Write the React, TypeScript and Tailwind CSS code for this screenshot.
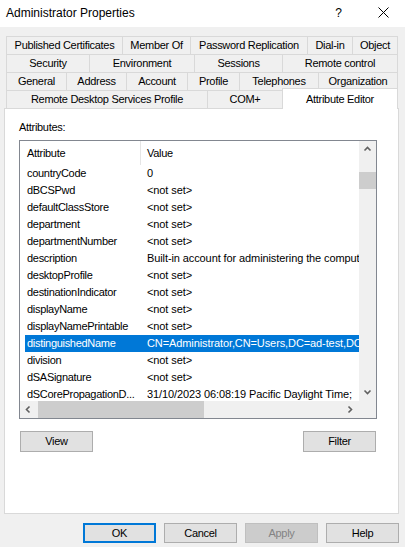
import React from "react";

type Tab = { label: string; w: string; last?: boolean };

const tabRows: Tab[][] = [
  [
    { label: "Published Certificates", w: "w-[116px]" },
    { label: "Member Of", w: "w-[68px]" },
    { label: "Password Replication", w: "w-[117px]" },
    { label: "Dial-in", w: "w-[45px]" },
    { label: "Object", w: "w-[46px]", last: true },
  ],
  [
    { label: "Security", w: "w-[83px]" },
    { label: "Environment", w: "w-[105px]" },
    { label: "Sessions", w: "w-[88px]" },
    { label: "Remote control", w: "w-[116px]", last: true },
  ],
  [
    { label: "General", w: "w-[60px]" },
    { label: "Address", w: "w-[60px]" },
    { label: "Account", w: "w-[61px]" },
    { label: "Profile", w: "w-[52px]" },
    { label: "Telephones", w: "w-[79px]" },
    { label: "Organization", w: "w-[80px]", last: true },
  ],
];

const attributes: [string, string][] = [
  ["countryCode", "0"],
  ["dBCSPwd", "<not set>"],
  ["defaultClassStore", "<not set>"],
  ["department", "<not set>"],
  ["departmentNumber", "<not set>"],
  ["description", "Built-in account for administering the computer/domain"],
  ["desktopProfile", "<not set>"],
  ["destinationIndicator", "<not set>"],
  ["displayName", "<not set>"],
  ["displayNamePrintable", "<not set>"],
  ["distinguishedName", "CN=Administrator,CN=Users,DC=ad-test,DC=local"],
  ["division", "<not set>"],
  ["dSASignature", "<not set>"],
  ["dSCorePropagationD...", "31/10/2023 06:08:19 Pacific Daylight Time;"],
];

function TabCell({ tab }: { tab: Tab }) {
  return (
    <div
      className={`flex h-[18px] shrink-0 items-center justify-center border-l border-t border-[#d9d9d9] whitespace-nowrap ${tab.w} ${
        tab.last ? "border-r" : ""
      }`}
    >
      {tab.label}
    </div>
  );
}

function Chevron({ dir }: { dir: "up" | "down" | "left" | "right" }) {
  const d = {
    up: "M1.5 5.5 L4.5 2.5 L7.5 5.5",
    down: "M1.5 2.5 L4.5 5.5 L7.5 2.5",
    left: "M5.5 1.5 L2.5 4.5 L5.5 7.5",
    right: "M2.5 1.5 L5.5 4.5 L2.5 7.5",
  }[dir];
  return (
    <svg width="9" height="9" viewBox="0 0 9 9" aria-hidden="true">
      <path d={d} fill="none" stroke="#606060" strokeWidth={1.6} />
    </svg>
  );
}

function Button({ label, className = "" }: { label: string; className?: string }) {
  return (
    <div
      className={`flex h-[21px] w-[73px] items-center justify-center border border-[#adadad] bg-[#e1e1e1] ${className}`}
    >
      {label}
    </div>
  );
}

export default function App() {
  return (
    <div className="h-[547px] w-[405px] overflow-hidden bg-[#f0f0f0] font-['Liberation_Sans',Arial,sans-serif] text-[11px] tracking-[-0.3px] text-black">
      {/* Title bar */}
      <div className="flex h-[27px] items-center bg-white pb-[2px] pl-[6px] pr-[16px] text-[12px] tracking-normal">
        <span className="flex-1">Administrator Properties</span>
        <span className="mr-[36px]">?</span>
        <svg width="11" height="11" viewBox="0 0 11 11" aria-hidden="true">
          <path d="M0.5 0.5 L10.5 10.5 M10.5 0.5 L0.5 10.5" stroke="#000" strokeWidth={1} />
        </svg>
      </div>

      {/* Tabs */}
      <div className="mt-[9px] ml-[6px]">
        {tabRows.map((row, i) => (
          <div key={i} className="flex">
            {row.map((t) => (
              <TabCell key={t.label} tab={t} />
            ))}
          </div>
        ))}
        <div className="flex h-[18px] items-end">
          <div className="flex h-[18px] w-[201px] items-center justify-center self-start border-l border-t border-[#d9d9d9]">
            Remote Desktop Services Profile
          </div>
          <div className="flex h-[18px] w-[75px] items-center justify-center self-start border-l border-t border-[#d9d9d9]">
            COM+
          </div>
          <div className="relative z-10 -mb-px flex h-[21px] w-[116px] items-center justify-center border-l border-r border-t border-[#d9d9d9] bg-white">
            Attribute Editor
          </div>
        </div>
      </div>

      {/* Tab page */}
      <div className="ml-[4px] flex h-[406px] w-[395px] flex-col border border-[#d9d9d9] bg-white pl-[14px] pt-[12px]">
        <div className="h-[13px] leading-[13px]">Attributes:</div>

        <div className="mt-[6px] flex h-[279px] w-[358px] flex-col border border-[#828790]">
          <div className="flex h-[260px]">
            <div className="w-[339px] overflow-hidden">
              <div className="w-[700px]">
                <div className="flex h-[24px] items-center">
                  <div className="flex h-full w-[121px] items-center border-r border-[#e5e5e5] pl-[7px]">
                    Attribute
                  </div>
                  <div className="pl-[6px]">Value</div>
                </div>
                {attributes.map(([name, value]) => {
                  const sel = name === "distinguishedName";
                  return (
                    <div key={name} className="h-[17px] pl-[5px] leading-[17px]">
                      <div className={`flex h-full whitespace-nowrap ${sel ? "bg-[#0078d7] text-white" : ""}`}>
                        <div className="w-[116px] shrink-0 overflow-hidden pl-[2px]">{name}</div>
                        <div className="pl-[6px] tracking-[-0.1px]">{value}</div>
                      </div>
                    </div>
                  );
                })}
              </div>
            </div>
            {/* vertical scrollbar */}
            <div className="flex w-[17px] flex-col bg-[#f0f0f0]">
              <div className="flex h-[17px] items-center justify-center">
                <Chevron dir="up" />
              </div>
              <div className="flex-1">
                <div className="mt-[14px] h-[17px] bg-[#cdcdcd]" />
              </div>
              <div className="flex h-[17px] items-center justify-center">
                <Chevron dir="down" />
              </div>
            </div>
          </div>
          {/* horizontal scrollbar */}
          <div className="flex h-[17px] bg-[#f0f0f0]">
            <div className="flex w-[339px]">
              <div className="flex w-[17px] items-center justify-center">
                <Chevron dir="left" />
              </div>
              <div className="flex-1">
                <div className="ml-[1px] h-full w-[166px] bg-[#cdcdcd]" />
              </div>
              <div className="flex w-[17px] items-center justify-center">
                <Chevron dir="right" />
              </div>
            </div>
            <div className="w-[17px]" />
          </div>
        </div>

        <div className="mt-[12px] flex w-[358px] justify-between px-[1px]">
          <Button label="View" />
          <Button label="Filter" />
        </div>
      </div>

      {/* Dialog buttons */}
      <div className="mt-[9px] flex justify-end gap-[8px] pr-[6px]">
        <div className="flex h-[20px] w-[73px] items-center justify-center border-2 border-[#0078d7] bg-[#e1e1e1]">
          OK
        </div>
        <div className="flex h-[20px] w-[73px] items-center justify-center border border-[#adadad] bg-[#e1e1e1]">
          Cancel
        </div>
        <div className="flex h-[20px] w-[73px] items-center justify-center border border-[#bfbfbf] bg-[#cccccc] text-[#838383]">
          Apply
        </div>
        <div className="flex h-[20px] w-[73px] items-center justify-center border border-[#adadad] bg-[#e1e1e1]">
          Help
        </div>
      </div>
    </div>
  );
}
